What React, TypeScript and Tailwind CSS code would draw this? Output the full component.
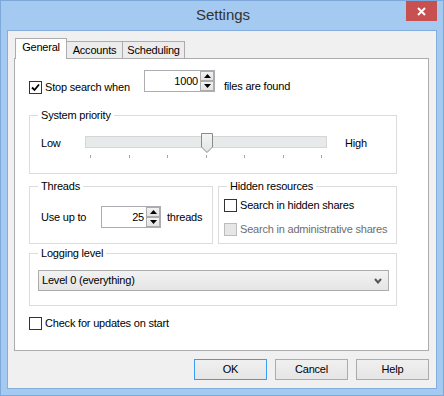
import React from "react";

function CheckBox({ checked = false, disabled = false }: { checked?: boolean; disabled?: boolean }) {
  return (
    <span
      className={
        disabled
          ? "w-[13px] h-[13px] shrink-0 border border-[#bcbcbc] bg-[#e6e6e6]"
          : "w-[13px] h-[13px] shrink-0 border border-[#333333] bg-white flex items-center justify-center"
      }
    >
      {checked && (
        <svg width="9" height="9" viewBox="0 0 9 9">
          <path d="M1 4.5 L3.5 7 L8 1.5" fill="none" stroke="#000" strokeWidth="1.8" />
        </svg>
      )}
    </span>
  );
}

function SpinBtn({ up = false }: { up?: boolean }) {
  return (
    <div className="flex-1 border border-[#acacac] bg-gradient-to-b from-[#f2f2f2] to-[#e2e2e2] flex items-center justify-center">
      <svg width="7" height="4" viewBox="0 0 7 4">
        <path d={up ? "M0 4 L3.5 0 L7 4 Z" : "M0 0 L7 0 L3.5 4 Z"} fill="#000" />
      </svg>
    </div>
  );
}

function Spin({ value, className }: { value: string; className: string }) {
  return (
    <div className={`${className} h-[22px] border border-[#abadb3] bg-white flex`}>
      <div className="flex-1 flex items-center justify-end pr-[2px]">{value}</div>
      <div className="w-[14px] flex flex-col">
        <SpinBtn up />
        <SpinBtn />
      </div>
    </div>
  );
}

function Group({ title, className, children }: { title: string; className: string; children: React.ReactNode }) {
  return (
    <fieldset className={`${className} border border-[#dcdcdc]`}>
      <legend className="ml-[8px] px-[3px] leading-[15px]">{title}</legend>
      {children}
    </fieldset>
  );
}

function Button({ label, focused = false }: { label: string; focused?: boolean }) {
  return (
    <div
      className={
        focused
          ? "w-[73px] h-[21px] border border-[#3c9cf0] bg-gradient-to-b from-[#f0f0f0] to-[#e5e5e5] flex items-center justify-center"
          : "w-[73px] h-[21px] border border-[#acacac] bg-gradient-to-b from-[#f0f0f0] to-[#e5e5e5] flex items-center justify-center"
      }
    >
      {label}
    </div>
  );
}

export default function App() {
  const ticks = [0, 1, 2, 3, 4, 5, 6];
  return (
    <div className="w-[444px] h-[396px] bg-[#a4caf2] border border-[#7ea8d9] px-[6px] flex flex-col font-['Liberation_Sans',Arial,sans-serif] text-[11px] tracking-[-0.2px] text-black">
      {/* Title bar */}
      <div className="relative h-[29px] flex items-center justify-center">
        <span className="text-[15px] tracking-normal text-[#333333] pl-[2px]">Settings</span>
        <div className="absolute right-0 top-0 w-[31px] h-[20px] bg-[#c75050] flex items-center justify-center">
          <svg width="9" height="9" viewBox="0 0 9 9">
            <path d="M1 1 L8 8 M8 1 L1 8" stroke="#fff" strokeWidth="2" />
          </svg>
        </div>
      </div>

      {/* Client area */}
      <div className="w-[430px] h-[359px] border border-[#86aedd] bg-[#f0f0f0] flex flex-col">
        {/* Tabs */}
        <div className="flex items-end mt-[8px] ml-[7px] h-[20px] relative z-10">
          <div className="w-[52px] h-[21px] border border-b-0 border-[#acacac] bg-white flex items-center justify-center pb-[3px]">
            General
          </div>
          <div className="w-[56px] h-[18px] border border-l-0 border-[#acacac] bg-[#ececec] flex items-center justify-center">
            Accounts
          </div>
          <div className="w-[62px] h-[18px] border border-l-0 border-[#acacac] bg-[#ececec] flex items-center justify-center">
            Scheduling
          </div>
        </div>

        {/* Tab panel */}
        <div className="ml-[6px] -mt-px w-[415px] h-[293px] border border-[#acacac] bg-white pl-[14px] pt-[11px]">
          {/* Stop search row */}
          <div className="flex items-start h-[22px]">
            <div className="w-[115px] h-[13px] mt-[11px] flex items-center">
              <CheckBox checked />
              <span className="ml-[3px]">Stop search when</span>
            </div>
            <Spin value="1000" className="w-[71px]" />
            <span className="ml-[9px] mt-[9px] leading-[15px]">files are found</span>
          </div>

          {/* System priority */}
          <Group title="System priority" className="w-[368px] mt-[16px] h-[66px]">
            <div className="flex items-start pl-[11px]">
              <span className="w-[44px] mt-[13px] leading-[15px]">Low</span>
              <div className="w-[242px] pt-[13px] flex flex-col">
                <div className="relative h-[12px] border border-[#d6d6d6] bg-[#e7eaea]">
                  <svg className="absolute left-[115px] -top-[4px]" width="12" height="20" viewBox="0 0 12 20">
                    <defs>
                      <linearGradient id="th" x1="0" y1="0" x2="0" y2="1">
                        <stop offset="0" stopColor="#f4f4f4" />
                        <stop offset="1" stopColor="#e4e4e4" />
                      </linearGradient>
                    </defs>
                    <path d="M0.5 0.5 H11.5 V14 L6 19.5 L0.5 14 Z" fill="url(#th)" stroke="#8a8a8a" />
                  </svg>
                </div>
                <div className="flex justify-between px-[5px] mt-[7px] h-[3px]">
                  {ticks.map((t) => (
                    <span key={t} className="w-px h-[3px] bg-[#a5a5a5]" />
                  ))}
                </div>
              </div>
              <span className="ml-[18px] mt-[13px] leading-[15px]">High</span>
            </div>
          </Group>

          {/* Threads + Hidden resources */}
          <div className="flex items-stretch mt-[5px] w-[368px]">
            <Group title="Threads" className="w-[184px]">
              <div className="flex items-center pl-[11px] mt-[12px] mb-[15px]">
                <span className="w-[60px]">Use up to</span>
                <Spin value="25" className="w-[60px]" />
                <span className="ml-[6px]">threads</span>
              </div>
            </Group>
            <Group title="Hidden resources" className="w-[179px] ml-[5px]">
              <div className="flex flex-col pl-[5px] mt-[5px]">
                <div className="flex items-center h-[13px]">
                  <CheckBox />
                  <span className="ml-[3px]">Search in hidden shares</span>
                </div>
                <div className="flex items-center h-[13px] mt-[11px]">
                  <CheckBox disabled />
                  <span className="ml-[3px] text-[#6d6d6d]">Search in administrative shares</span>
                </div>
              </div>
            </Group>
          </div>

          {/* Logging level */}
          <Group title="Logging level" className="w-[368px] mt-[2px]">
            <div className="ml-[8px] mt-[9px] mb-[14px] w-[351px] h-[21px] border border-[#acacac] bg-gradient-to-b from-[#f2f2f2] to-[#e5e5e5] flex items-center pl-[3px] pr-[6px]">
              <span className="flex-1">Level 0 (everything)</span>
              <svg width="8" height="6" viewBox="0 0 8 6">
                <path d="M1 1 L4 4.5 L7 1" fill="none" stroke="#555" strokeWidth="2" />
              </svg>
            </div>
          </Group>

          {/* Updates */}
          <div className="flex items-center h-[13px] mt-[11px]">
            <CheckBox />
            <span className="ml-[3px]">Check for updates on start</span>
          </div>
        </div>

        {/* Buttons */}
        <div className="flex justify-end gap-[8px] mt-[8px] mr-[7px]">
          <Button label="OK" focused />
          <Button label="Cancel" />
          <Button label="Help" />
        </div>
      </div>
    </div>
  );
}
